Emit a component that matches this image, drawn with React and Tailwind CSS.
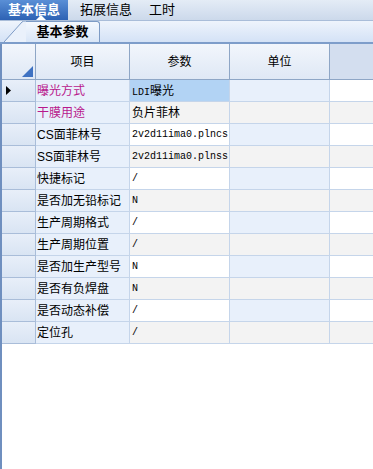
import React from 'react';

const rows = [
  { name: '曝光方式', value: 'LDI曝光', pink: true, current: true },
  { name: '干膜用途', value: '负片菲林', pink: true },
  { name: 'CS面菲林号', value: '2v2d11ima0.plncs', mono: true },
  { name: 'SS面菲林号', value: '2v2d11ima0.plnss', mono: true },
  { name: '快捷标记', value: '/', mono: true },
  { name: '是否加无铅标记', value: 'N', mono: true },
  { name: '生产周期格式', value: '/', mono: true },
  { name: '生产周期位置', value: '/', mono: true },
  { name: '是否加生产型号', value: 'N', mono: true },
  { name: '是否有负焊盘', value: 'N', mono: true },
  { name: '是否动态补偿', value: '/', mono: true },
  { name: '定位孔', value: '/', mono: true },
];

const cjk = { fontFamily: '"Liberation Sans", "Noto Sans CJK SC", sans-serif' };

const App = () => {
  return (
    <div className="w-[373px] h-[469px] bg-white overflow-hidden flex flex-col text-[12px] text-black" style={cjk}>
      {/* top tabs */}
      <div className="h-[21px] flex items-stretch bg-gradient-to-b from-[#e4ecf6] to-[#ccd9eb] border-b border-[#a9bdd9]">
        <div className="relative w-[68px] flex items-center justify-center bg-gradient-to-b from-[#5a8fd6] to-[#2d62b4] text-white font-bold text-[13px]">
          基本信息
          <div className="absolute left-[36px] bottom-0 w-0 h-0 border-l-[5px] border-r-[5px] border-b-[5px] border-l-transparent border-r-transparent border-b-white" />
        </div>
        <div className="w-[76px] flex items-center justify-center text-[13px]">拓展信息</div>
        <div className="w-[36px] flex items-center justify-center text-[13px]">工时</div>
      </div>

      {/* sub tab strip */}
      <div className="h-[23px] flex items-end bg-gradient-to-b from-[#eef4fc] to-[#d4e2f6] border-b-2 border-[#7d9dca]">
        <div className="ml-[4px] flex items-end h-[21px]">
          <svg width="22" height="21" viewBox="0 0 22 21" className="block">
            <path d="M0 21 L18 1 Q19 0 21 0 L22 0 L22 21 Z" fill="#eaf1fb" />
            <path d="M0 21 L18 1 Q19 0 21 0 L22 0" fill="none" stroke="#7d9bc5" strokeWidth="1" />
          </svg>
          <div className="h-[21px] w-[74px] flex items-center justify-center font-bold text-[13px] bg-gradient-to-b from-[#f4f8fe] to-[#d9e6f7] border-t border-r border-[#7d9bc5] rounded-tr-[3px]">
            基本参数
          </div>
        </div>
      </div>

      {/* grid */}
      <div className="flex-1 flex flex-col border-l-2 border-[#6f8fbf]">
        <div className="h-[36px] flex border-b border-[#8ea6c6] bg-gradient-to-b from-[#f2f6fc] to-[#dfe8f5]">
          <div className="w-[34px] relative border-r border-[#8ea6c6]">
            <svg width="11" height="11" viewBox="0 0 11 11" className="absolute right-[2px] bottom-[2px]">
              <path d="M11 0 L11 11 L0 11 Z" fill="#3f72c2" />
            </svg>
          </div>
          <div className="w-[94px] flex items-center justify-center border-r border-[#8ea6c6]">项目</div>
          <div className="w-[100px] flex items-center justify-center border-r border-[#8ea6c6]">参数</div>
          <div className="w-[100px] flex items-center justify-center border-r border-[#8ea6c6]">单位</div>
          <div className="flex-1 bg-[#d3deef]" />
        </div>

        {rows.map((r, i) => {
          const odd = i % 2 === 1;
          return (
            <div key={i} className="h-[22px] flex">
              <div className="w-[34px] flex items-center pl-[4px] border-r border-b border-[#a9bdd9] bg-gradient-to-b from-[#e8eff9] to-[#d9e4f3]">
                {r.current && (
                  <svg width="5" height="9" viewBox="0 0 5 9">
                    <path d="M0 0 L5 4.5 L0 9 Z" fill="#000" />
                  </svg>
                )}
              </div>
              <div className={`w-[94px] flex items-center pl-[1px] border-r border-b border-[#c5d5ea] bg-[#e8f0fb] whitespace-nowrap ${r.pink ? 'text-[#b8188c]' : ''}`}>
                {r.name}
              </div>
              <div className={`w-[100px] flex items-center pl-[2px] border-r border-b border-[#c5d5ea] whitespace-nowrap ${r.current ? 'bg-[#b2d3f4]' : odd ? 'bg-[#f3f3f3]' : 'bg-white'}`}>
                {r.mono ? (
                  <span className="text-[10px]" style={{ fontFamily: '"Liberation Mono", monospace' }}>{r.value}</span>
                ) : r.current ? (
                  <span>
                    <span className="text-[10px]" style={{ fontFamily: '"Liberation Mono", monospace' }}>LDI</span>曝光
                  </span>
                ) : (
                  r.value
                )}
              </div>
              <div className={`w-[100px] border-r border-b border-[#c5d5ea] ${odd ? 'bg-[#f3f3f3]' : 'bg-[#e8f0fb]'}`} />
              <div className={`flex-1 border-b border-[#c5d5ea] ${odd ? 'bg-[#f3f3f3]' : 'bg-white'}`} />
            </div>
          );
        })}
      </div>
    </div>
  );
};

export default App;
